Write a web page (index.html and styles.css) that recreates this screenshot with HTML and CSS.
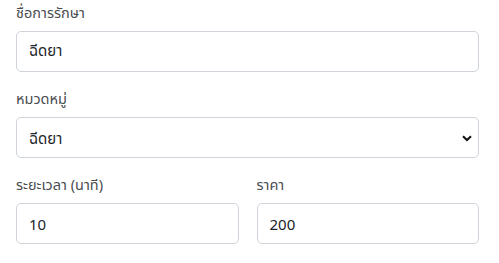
FILE: index.html
```html
<!DOCTYPE html>
<html lang="th">
<head>
<meta charset="utf-8">
<link rel="stylesheet" href="styles.css">
</head>
<body>
<form class="form">
  <div class="group">
    <label class="label">ชื่อการรักษา</label>
    <input class="control" type="text" value="ฉีดยา">
  </div>
  <div class="group">
    <label class="label">หมวดหมู่</label>
    <div class="select-wrap">
      <select class="control select">
        <option>ฉีดยา</option>
      </select>
      <svg class="chev" viewBox="0 0 10 7" width="10" height="7"><path d="M1 1.2 L5 5 L9 1.2" fill="none" stroke="#111" stroke-width="2"/></svg>
    </div>
  </div>
  <div class="row">
    <div class="group">
      <label class="label">ระยะเวลา (นาที)</label>
      <input class="control" type="text" value="10">
    </div>
    <div class="group">
      <label class="label">ราคา</label>
      <input class="control" type="text" value="200">
    </div>
  </div>
</form>
</body>
</html>
```
FILE: styles.css
```css
html, body {
  margin: 0;
  padding: 0;
  background: #fff;
}
body {
  font-family: "Segoe UI", "Noto Sans", "Noto Sans Thai", "Leelawadee UI", sans-serif;
  color: #212529;
}
.form {
  padding: 2px 20px 0 16px;
}
.group {
  display: flex;
  flex-direction: column;
  margin-bottom: 16px;
}
.label {
  display: block;
  font-size: 14.5px;
  font-weight: 400;
  line-height: 21px;
  margin-bottom: 8px;
  color: #4a4d50;
}
.control {
  box-sizing: border-box;
  height: 41px;
  width: 100%;
  padding: 0 12px;
  font-family: inherit;
  font-size: 15px;
  color: #212529;
  background: #fff;
  border: 1px solid #ced4da;
  border-radius: 5px;
  outline: none;
}
.select-wrap {
  position: relative;
}
.select {
  appearance: none;
  -webkit-appearance: none;
}
.chev {
  position: absolute;
  right: 7px;
  top: 50%;
  margin-top: -3px;
  pointer-events: none;
}
.row {
  display: grid;
  grid-template-columns: 1fr 1fr;
  column-gap: 18px;
}
```
